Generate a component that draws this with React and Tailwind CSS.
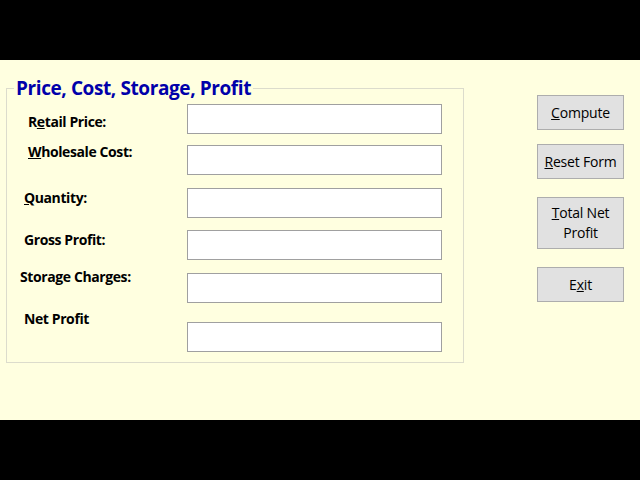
export default function App() {
  const labelCls = "shrink-0 w-[180px] text-[14px] leading-[20px] font-bold tracking-[-0.4px] text-black";
  const inputCls = "w-[255px] h-[30px] bg-white border border-[#a0a0a0] outline-none px-1 text-[14px]";
  const btnCls = "w-[87px] bg-[#e1e1e1] border border-[#adadad] text-[14px] leading-[20px] tracking-[-0.2px] text-black";

  return (
    <div className="w-[640px] h-[480px] flex flex-col" style={{ fontFamily: '"Open Sans", "Noto Sans", sans-serif' }}>
      <div className="h-[60px] bg-black" />
      <div className="h-[360px] bg-[#ffffe0] flex items-start">
        {/* group box */}
        <div className="relative ml-[6px] mt-[28px] w-[458px] h-[275px] border border-[#dcdccc] pt-[15px]">
          <div className="absolute left-[7px] -top-[13px] px-[2px] bg-[#ffffe0] text-[19px] leading-[24px] font-bold tracking-[-0.4px] text-[#0000aa]">
            Price, Cost, Storage, Profit
          </div>

          <div className="flex items-start">
            <label className={`${labelCls} pl-[21px] mt-[8px]`}>R<u>e</u>tail Price:</label>
            <input className={inputCls} />
          </div>

          <div className="flex items-start mt-[8px]">
            <label className={`${labelCls} pl-[21px]`}><u>W</u>holesale Cost:</label>
            <input className={`${inputCls} mt-[3px]`} />
          </div>

          <div className="flex items-start mt-[13px]">
            <label className={`${labelCls} pl-[17px]`}><u>Q</u>uantity:</label>
            <input className={inputCls} />
          </div>

          <div className="flex items-start mt-[12px]">
            <label className={`${labelCls} pl-[17px]`}>Gross Profit:</label>
            <input className={inputCls} />
          </div>

          <div className="flex items-start mt-[7px]">
            <label className={`${labelCls} pl-[13px]`}>Storage Charges:</label>
            <input className={`${inputCls} mt-[6px]`} />
          </div>

          <div className="flex items-start mt-[6px]">
            <label className={`${labelCls} pl-[17px]`}>Net Profit</label>
            <input className={`${inputCls} mt-[13px]`} />
          </div>
        </div>

        {/* buttons */}
        <div className="flex flex-col ml-[73px] mt-[35px]">
          <button className={`${btnCls} h-[35px]`}><u>C</u>ompute</button>
          <button className={`${btnCls} h-[35px] mt-[14px]`}><u>R</u>eset Form</button>
          <button className={`${btnCls} h-[52px] mt-[18px]`}><u>T</u>otal Net<br />Profit</button>
          <button className={`${btnCls} h-[35px] mt-[18px]`}>E<u>x</u>it</button>
        </div>
      </div>
      <div className="h-[60px] bg-black" />
    </div>
  );
}
